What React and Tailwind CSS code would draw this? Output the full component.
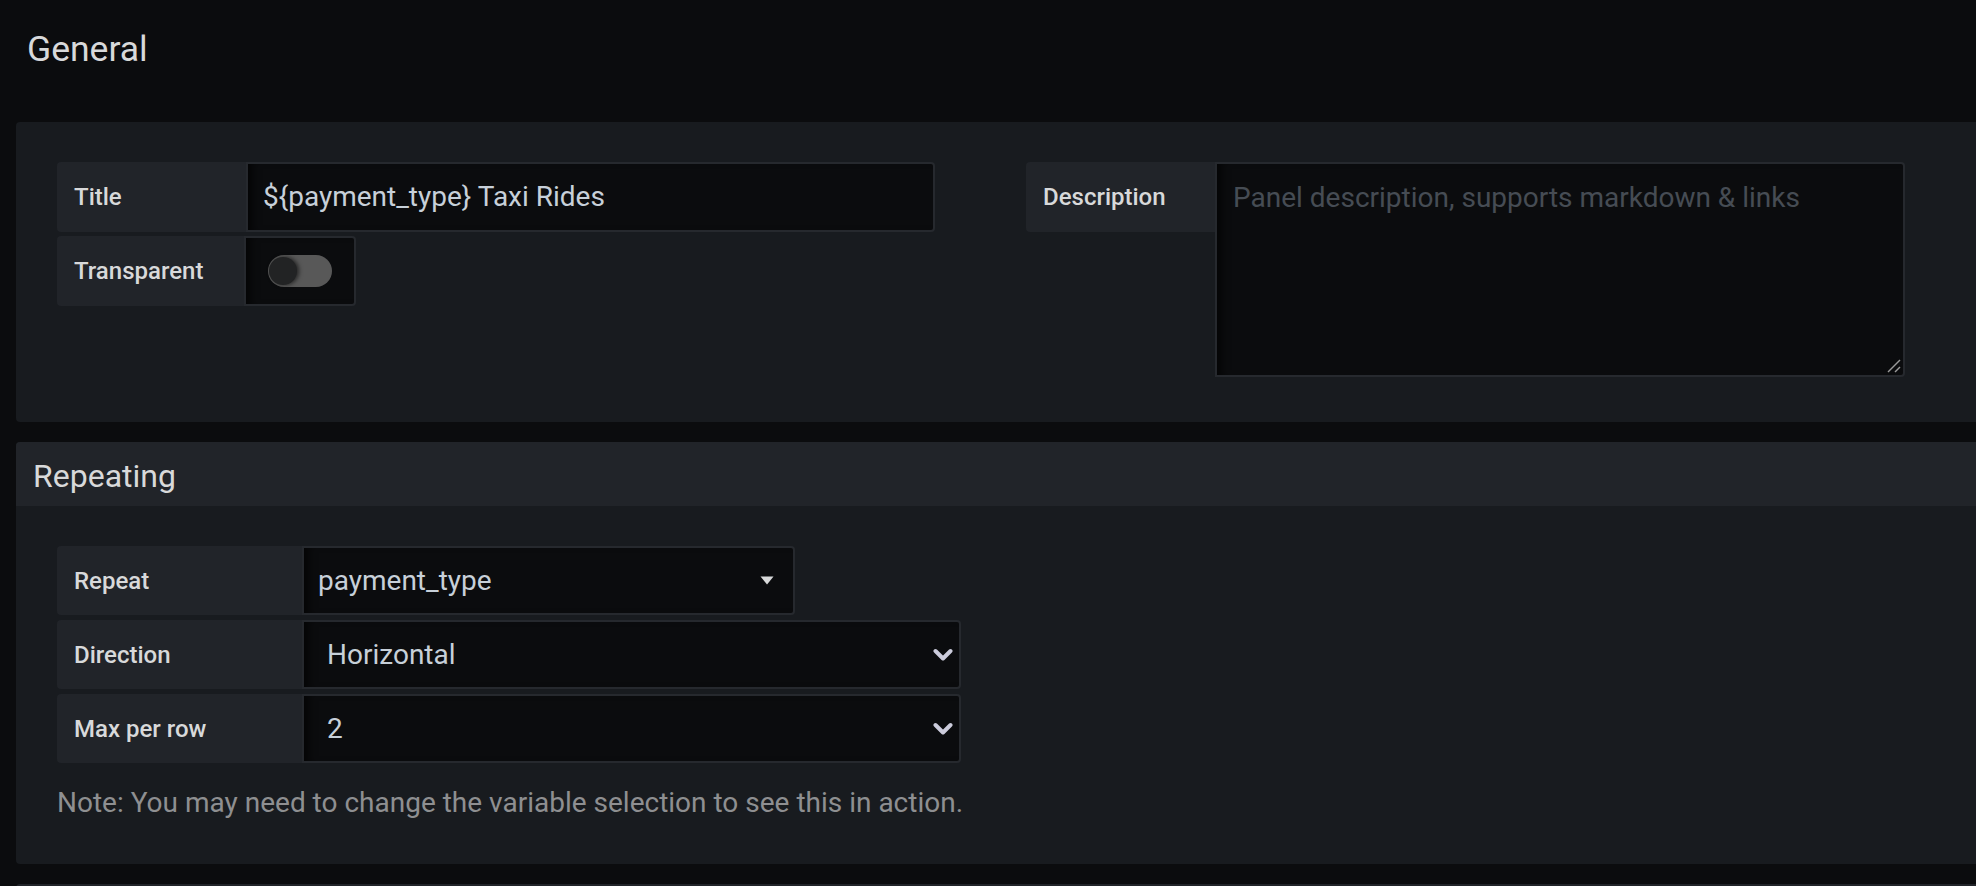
const font = { fontFamily: "Roboto, 'Liberation Sans', sans-serif" };

function Label({ children, w }) {
  return (
    <div
      className={`${w} h-full shrink-0 flex items-center pl-[17px] bg-[#212429] rounded-l-[4px] text-[24px] font-medium text-[#d8d9da]`}
    >
      {children}
    </div>
  );
}

function Chevron() {
  return (
    <svg width="20" height="14" viewBox="0 0 20 14" className="shrink-0">
      <polyline
        points="2.5,3 10,10.5 17.5,3"
        fill="none"
        stroke="#ccccdc"
        strokeWidth="4"
        strokeLinecap="round"
        strokeLinejoin="round"
      />
    </svg>
  );
}

function Caret() {
  return (
    <svg width="14" height="9" viewBox="0 0 14 9" className="shrink-0">
      <polygon points="0.5,0.5 13.5,0.5 7,8.5" fill="#d8d9da" />
    </svg>
  );
}

function Toggle() {
  return (
    <div className="w-[64px] h-[32px] rounded-full bg-[#585858] flex items-center pl-[1px]">
      <div className="w-[28px] h-[28px] rounded-full bg-[#222324] shadow-[2px_0_4px_rgba(0,0,0,0.6)]" />
    </div>
  );
}

const field =
  "h-full bg-[#0b0c0e] border-2 border-[#26292e] rounded-r-[4px] shadow-[inset_10px_0_10px_-6px_rgba(0,0,0,0.7)] flex items-center";

export default function App() {
  return (
    <div style={font} className="w-[1976px] h-[886px] overflow-hidden bg-[#0b0c0e]">
      <div className="h-[122px] pl-[27px] pt-[32px]">
        <h3 className="text-[35.5px] leading-[35px] font-normal text-[#d8d9da]">General</h3>
      </div>

      {/* General panel */}
      <div className="ml-[16px] w-[1990px] bg-[#181b1f] rounded-[4px] flex pl-[41px] pt-[40px] pb-[45px]">
        <div className="w-[878px] flex flex-col">
          <div className="h-[70px] flex mb-[4px]">
            <Label w="w-[189px]">Title</Label>
            <div className={`${field} flex-1 pl-[15px] text-[28px] text-[#c7d0d9]`}>
              {"${payment_type} Taxi Rides"}
            </div>
          </div>
          <div className="h-[70px] flex">
            <Label w="w-[187px]">Transparent</Label>
            <div className={`${field} w-[112px] pl-[22px]`}>
              <Toggle />
            </div>
          </div>
        </div>

        <div className="ml-[91px] flex items-start">
          <div className="h-[70px] flex">
            <Label w="w-[189px]">Description</Label>
          </div>
          <div className="relative w-[690px] h-[215px] bg-[#0b0c0e] border-2 border-[#26292e] rounded-r-[4px] shadow-[inset_10px_0_10px_-6px_rgba(0,0,0,0.7)] pl-[16px] pt-[16px] text-[28px] leading-[36px] text-[#464c54]">
            Panel description, supports markdown &amp; links
            <svg
              width="14"
              height="14"
              viewBox="0 0 14 14"
              className="absolute right-[2px] bottom-[2px]"
            >
              <line x1="1" y1="13" x2="13" y2="1" stroke="#9a9a9a" strokeWidth="1.5" />
              <line x1="8" y1="13" x2="13" y2="8" stroke="#9a9a9a" strokeWidth="1.5" />
            </svg>
          </div>
        </div>
      </div>

      {/* Repeating panel */}
      <div className="ml-[16px] mt-[20px] w-[1990px] bg-[#181b1f] rounded-[4px] overflow-hidden">
        <div className="h-[64px] bg-[#212429] flex items-center pl-[17px] pt-[3px]">
          <h5 className="text-[32px] font-normal text-[#d8d9da]">Repeating</h5>
        </div>
        <div className="pl-[41px] pt-[40px] pb-[45px]">
          <div className="h-[69px] flex mb-[5px]">
            <Label w="w-[245px]">Repeat</Label>
            <div className={`${field} w-[493px] pl-[14px] pr-[19px] justify-between text-[28px] text-[#c7d0d9]`}>
              <span>payment_type</span>
              <Caret />
            </div>
          </div>
          <div className="h-[69px] flex mb-[5px]">
            <Label w="w-[245px]">Direction</Label>
            <div className={`${field} w-[659px] pl-[23px] pr-[6px] justify-between text-[28px] text-[#c7d0d9]`}>
              <span>Horizontal</span>
              <Chevron />
            </div>
          </div>
          <div className="h-[69px] flex">
            <Label w="w-[245px]">Max per row</Label>
            <div className={`${field} w-[659px] pl-[23px] pr-[6px] justify-between text-[28px] text-[#c7d0d9]`}>
              <span>2</span>
              <Chevron />
            </div>
          </div>
          <p className="mt-[23px] text-[28px] leading-[33px] text-[#8e8f91]">
            Note: You may need to change the variable selection to see this in action.
          </p>
        </div>
      </div>

      <div className="ml-[16px] mt-[20px] w-[1990px] h-[64px] bg-[#212429] rounded-t-[4px]" />
    </div>
  );
}
